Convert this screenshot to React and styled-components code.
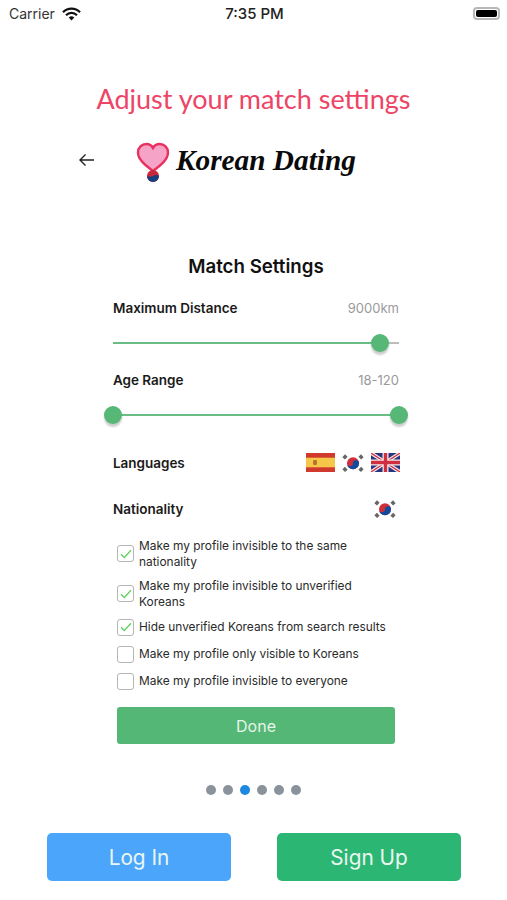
import React from 'react';
import styled, { createGlobalStyle } from 'styled-components';

const GlobalStyle = createGlobalStyle`
  html, body { margin: 0; padding: 0; background: #fff; }
  body { font-family: Inter, "Liberation Sans", sans-serif; color: #111; }
`;

const TaegukFlag = ({ size = 28 }) => (
  <svg width={size} height={size * 0.8} viewBox="0 0 30 24">
    <rect width="30" height="24" fill="#fff" />
    <circle cx="15" cy="12" r="6.4" fill="#cd2e3a" />
    <path d="M8.6 12a6.4 6.4 0 0 0 12.8 0 3.2 3.2 0 0 0-6.4 0 3.2 3.2 0 0 1-6.4 0z" fill="#0f4a9c" />
    <g stroke="#666" strokeWidth="3.8" strokeLinecap="butt">
      <path d="M5 6.800 7.800 3.800" />
      <path d="M22.200 3.800 25 6.800" />
      <path d="M5 17.200 7.800 20.200" />
      <path d="M22.200 20.200 25 17.200" />
    </g>
  </svg>
);

const SpainFlag = () => (
  <svg width="29" height="19" viewBox="0 0 29 19">
    <rect width="29" height="19" fill="#d0392e" />
    <rect y="4.7" width="29" height="9.6" fill="#f6c84a" />
    <rect x="7" y="7" width="4" height="5" rx="1.2" fill="#b5752d" />
  </svg>
);

const UkFlag = () => (
  <svg width="29" height="19" viewBox="0 0 29 19">
    <rect width="29" height="19" fill="#27357e" />
    <path d="M0 0l29 19M29 0L0 19" stroke="#f3e6e6" strokeWidth="3.6" />
    <path d="M0 0l29 19M29 0L0 19" stroke="#cf2f3f" strokeWidth="1.2" />
    <path d="M14.5 0v19M0 9.5h29" stroke="#f5eaea" strokeWidth="6" />
    <path d="M14.5 0v19M0 9.5h29" stroke="#cf2f3f" strokeWidth="3.4" />
  </svg>
);

const WifiIcon = () => (
  <svg width="19" height="14" viewBox="0 0 19 14">
    <path d="M1 5.2a12 12 0 0 1 17 0" fill="none" stroke="#111" strokeWidth="2.3" />
    <path d="M4 8.2a7.8 7.8 0 0 1 11 0" fill="none" stroke="#111" strokeWidth="2.3" />
    <path d="M9.5 13.5 6.7 10.6a4 4 0 0 1 5.6 0z" fill="#111" />
  </svg>
);

const HeartLogo = () => (
  <svg width="34" height="42" viewBox="0 0 34 42">
    <path
      d="M17 29C9 23 2 17.5 2 10.5 2 5.5 5.700 2 10.500 2c2.900 0 5.200 1.500 6.500 4 1.300-2.500 3.600-4 6.500-4C28.300 2 32 5.500 32 10.500 32 17.500 25 23 17 29z"
      fill="#f5a3c7"
      stroke="#e8315f"
      strokeWidth="2.400"
    />
    <circle cx="17" cy="34" r="6" fill="#c8283c" />
    <path d="M11 34a6 6 0 0 0 12 0c-2-1.500-4-1-6 0s-4 1-6 0z" fill="#16407f" />
  </svg>
);

const CheckMark = () => (
  <svg width="12" height="10" viewBox="0 0 12 10">
    <path d="M1 5.200 4.300 8.500 11 1.200" fill="none" stroke="#5fd35f" strokeWidth="1.300" />
  </svg>
);

const Page = styled.div`
  width: 507px;
  height: 900px;
  overflow: hidden;
  background: #fff;
  display: flex;
  flex-direction: column;
`;

const StatusBar = styled.div`
  height: 27px;
  padding: 0 7px 0 9px;
  display: grid;
  grid-template-columns: 1fr auto 1fr;
  align-items: center;
  font-size: 14px;
  color: #222;
`;

const Carrier = styled.div`
  display: flex;
  align-items: center;
  gap: 7px;
  color: #333;
`;

const Clock = styled.div`
  font-weight: 500;
  font-size: 15px;
`;

const Battery = styled.div`
  justify-self: end;
  position: relative;
  width: 27px;
  height: 13px;
  border: 2px solid #b8b8b8;
  border-radius: 4px;
  box-sizing: border-box;
  padding: 1px;
  display: flex;
  &::before {
    content: '';
    flex: 1;
    background: #000;
    border-radius: 2px;
  }
`;

const Title = styled.h1`
  margin: 53px 0 0;
  text-align: center;
  font-family: Lato, "Liberation Sans", sans-serif;
  font-weight: 400;
  font-size: 27px;
  line-height: 38px;
  color: #ee4466;
`;

const LogoRow = styled.div`
  margin: 20px 0 0 78px;
  height: 44px;
  display: flex;
  align-items: center;
`;

const BackArrow = styled.svg`
  width: 17px;
  height: 14px;
  flex: none;
`;

const LogoMark = styled.div`
  margin-left: 41px;
  display: flex;
  margin-top: 6px;
`;

const LogoText = styled.span`
  margin-left: 6px;
  font-family: "Liberation Serif", serif;
  font-style: italic;
  font-weight: 700;
  font-size: 29.300px;
  color: #0a0a0a;
  white-space: nowrap;
`;

const Panel = styled.div`
  margin: 73px 0 0 113px;
  width: 286px;
  display: flex;
  flex-direction: column;
`;

const PanelTitle = styled.h2`
  margin: 0;
  text-align: center;
  font-size: 18.700px;
  line-height: 24px;
  font-weight: 600;
  color: #111;
`;

const Row = styled.div`
  display: flex;
  justify-content: space-between;
  align-items: center;
  height: 20px;
`;

const Label = styled.span`
  font-size: 13.500px;
  font-weight: 600;
  letter-spacing: -0.02px;
  color: #1a1a1a;
`;

const Value = styled.span`
  font-size: 13px;
  color: #9a9a9a;
`;

const DistanceRow = styled(Row)`
  margin-top: 19px;
`;

const AgeRow = styled(Row)`
  margin-top: 2px;
`;

const Slider = styled.div`
  position: relative;
  height: 2px;
  margin: 24px 0;
  background: #bdbdbd;
`;

const SliderFill = styled.div`
  height: 100%;
  background: #6bbd85;
`;

const Thumb = styled.div`
  position: absolute;
  top: -8px;
  width: 18px;
  height: 18px;
  margin-left: -9px;
  border-radius: 50%;
  background: #57b777;
  box-shadow: 0 3px 2px rgba(0, 0, 0, 0.2);
`;

const FlagRow = styled(Row)`
  height: 24px;
`;

const LanguageRow = styled(FlagRow)`
  margin-top: 11px;
`;

const NationalityRow = styled(FlagRow)`
  margin-top: 22px;
`;

const Flags = styled.div`
  display: flex;
  align-items: center;
  gap: 4px;
  margin-right: -1px;
`;

const CheckList = styled.div`
  margin: 17px 0 0 4px;
  display: flex;
  flex-direction: column;
  gap: 9px;
`;

const CheckRow = styled.div`
  display: flex;
  align-items: center;
  gap: 5px;
  min-height: 18px;
`;

const Box = styled.div`
  flex: none;
  width: 17px;
  height: 17px;
  box-sizing: border-box;
  border: 1px solid #b5b5b5;
  border-radius: 3px;
  background: #fff;
  display: flex;
  align-items: center;
  justify-content: center;
`;

const CheckText = styled.span`
  font-size: 11.900px;
  line-height: 15.500px;
  color: #2a2a2a;
`;

const DoneButton = styled.div`
  margin: 17px 0 0 4px;
  width: 278px;
  height: 37px;
  border-radius: 3px;
  background: #55b776;
  color: #e6f5ea;
  font-size: 16px;
  display: flex;
  align-items: center;
  justify-content: center;
`;

const Dots = styled.div`
  margin-top: 41px;
  display: flex;
  justify-content: center;
  gap: 7px;
`;

const Dot = styled.div`
  width: 10px;
  height: 10px;
  border-radius: 50%;
  background: ${(p) => (p.$active ? '#1e88e0' : '#8a939c')};
`;

const Footer = styled.div`
  margin-top: 38px;
  padding: 0 46px 0 47px;
  display: flex;
  justify-content: space-between;
`;

const FooterButton = styled.div`
  width: 184px;
  height: 48px;
  border-radius: 5px;
  background: ${(p) => p.$bg};
  color: #eaf6f2;
  font-size: 20.800px;
  display: flex;
  align-items: center;
  justify-content: center;
`;

const options = [
  { text: <>Make my profile invisible to the same<br />nationality</>, on: true },
  { text: <>Make my profile invisible to unverified<br />Koreans</>, on: true },
  { text: 'Hide unverified Koreans from search results', on: true },
  { text: 'Make my profile only visible to Koreans', on: false },
  { text: 'Make my profile invisible to everyone', on: false },
];

export default function App() {
  return (
    <Page>
      <GlobalStyle />
      <StatusBar>
        <Carrier>Carrier <WifiIcon /></Carrier>
        <Clock>7:35 PM</Clock>
        <Battery />
      </StatusBar>

      <Title>Adjust your match settings</Title>
      <LogoRow>
        <BackArrow viewBox="0 0 17 14">
          <path d="M16 7H2M7.500 1.500 2 7l5.500 5.500" fill="none" stroke="#222" strokeWidth="1.400" />
        </BackArrow>
        <LogoMark><HeartLogo /></LogoMark>
        <LogoText>Korean Dating</LogoText>
      </LogoRow>

      <Panel>
        <PanelTitle>Match Settings</PanelTitle>

        <DistanceRow>
          <Label>Maximum Distance</Label>
          <Value>9000km</Value>
        </DistanceRow>
        <Slider>
          <SliderFill style={{ width: '93.500%' }} />
          <Thumb style={{ left: '93.500%' }} />
        </Slider>

        <AgeRow>
          <Label>Age Range</Label>
          <Value>18-120</Value>
        </AgeRow>
        <Slider>
          <SliderFill style={{ width: '100%' }} />
          <Thumb style={{ left: 0 }} />
          <Thumb style={{ left: '100%' }} />
        </Slider>

        <LanguageRow>
          <Label>Languages</Label>
          <Flags>
            <SpainFlag />
            <TaegukFlag />
            <UkFlag />
          </Flags>
        </LanguageRow>
        <NationalityRow>
          <Label>Nationality</Label>
          <TaegukFlag />
        </NationalityRow>

        <CheckList>
          {options.map((o, i) => (
            <CheckRow key={i}>
              <Box>{o.on && <CheckMark />}</Box>
              <CheckText>{o.text}</CheckText>
            </CheckRow>
          ))}
        </CheckList>

        <DoneButton>Done</DoneButton>
      </Panel>

      <Dots>
        {[0, 1, 2, 3, 4, 5].map((i) => <Dot key={i} $active={i === 2} />)}
      </Dots>

      <Footer>
        <FooterButton $bg="#4ba5fb">Log In</FooterButton>
        <FooterButton $bg="#2bb673">Sign Up</FooterButton>
      </Footer>
    </Page>
  );
}
